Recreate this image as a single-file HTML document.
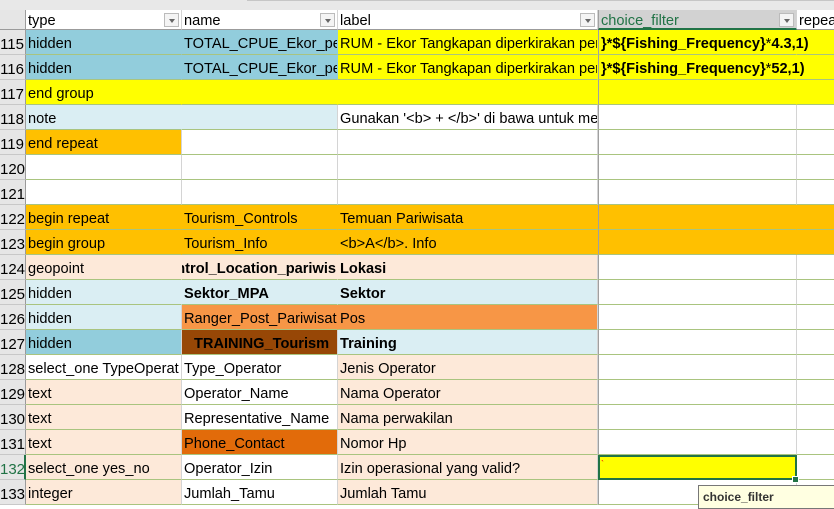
<!DOCTYPE html>
<html><head><meta charset="utf-8"><style>
*{margin:0;padding:0;box-sizing:border-box}
body{width:834px;height:506px;overflow:hidden;background:#fff;font-family:"Liberation Sans",Arial,sans-serif;font-size:14.6px;color:#000;position:relative}
.top{position:absolute;left:0;top:0;width:834px;height:10px;background:#e8e8e8}
.top i{position:absolute;left:247px;top:0;right:0;height:1px;background:#c6c6c6}
.r{position:absolute;left:0;display:flex;height:25px;width:834px;overflow:hidden}
.r>div{flex:none;height:25px;border-bottom:1px solid #a9c47f;border-right:1px solid #d4d4d4;white-space:nowrap;overflow:hidden;padding:3px 2px 0;line-height:23px;position:relative}
.r>div:nth-child(1){width:26px;background:#e6e6e6;text-align:right;padding:3px 1px 0 0;border-right:1px solid #9b9b9b;border-bottom:1px solid #c8c8c8;font-size:15px}
.r>div:nth-child(2){width:156px}
.r>div:nth-child(3){width:156px}
.r>div:nth-child(4){width:260px}
.r>div:nth-child(5){width:199px;border-left:1px solid #a0a0a0}
.r>div:nth-child(6){width:100px}
.h{top:10px;height:20px}
.h>div{height:20px!important;line-height:20px!important;border-bottom:1px solid #9b9b9b!important;padding-top:1px!important}
.dd{position:absolute;right:2px;top:3px;width:15px;height:14px;border:1px solid #bbb;background:#f4f4f4}
.dd:after{content:"";position:absolute;left:4px;top:5px;border-left:3px solid transparent;border-right:3px solid transparent;border-top:4px solid #666}
.bl{background:#92cddc}.y{background:#ffff00}.lb{background:#daeef3}.o{background:#ffc000}.p{background:#fde9d9}.or{background:#f79646}.br{background:#974706}.do{background:#e26b0a}
.b{font-weight:bold}
.nb{border-right-color:transparent!important}
.ov{overflow:visible!important;z-index:2}
</style></head><body>
<div class="top"><i></i></div>
<div class="r h"><div></div><div>type<span class="dd"></span></div><div>name<span class="dd"></span></div><div>label<span class="dd"></span></div><div style="background:#d2d2d2;color:#217346;border-bottom:2px solid #217346!important">choice_filter<span class="dd"></span></div><div>repeat_count</div></div>
<div class="r" style="top:30px"><div>115</div><div class="bl nb">hidden</div><div class="bl nb">TOTAL_CPUE_Ekor_pe</div><div class="y nb">RUM - Ekor Tangkapan diperkirakan pere</div><div class="y nb b ov">}*${Fishing_Frequency}<span style="font-weight:normal">*</span>4.3,1)</div><div class="y"></div></div>
<div class="r" style="top:55px"><div>116</div><div class="bl nb">hidden</div><div class="bl nb">TOTAL_CPUE_Ekor_pe</div><div class="y nb">RUM - Ekor Tangkapan diperkirakan pere</div><div class="y nb b ov">}*${Fishing_Frequency}<span style="font-weight:normal">*</span>52,1)</div><div class="y"></div></div>
<div class="r" style="top:80px"><div>117</div><div class="y nb">end group</div><div class="y nb"></div><div class="y nb"></div><div class="y nb"></div><div class="y"></div></div>
<div class="r" style="top:105px"><div>118</div><div class="lb nb">note</div><div class="lb"></div><div>Gunakan '&lt;b&gt; + &lt;/b&gt;' di bawa untuk me</div><div></div><div></div></div>
<div class="r" style="top:130px"><div>119</div><div class="o">end repeat</div><div></div><div></div><div></div><div></div></div>
<div class="r" style="top:155px"><div>120</div><div></div><div></div><div></div><div></div><div></div></div>
<div class="r" style="top:180px"><div>121</div><div></div><div></div><div></div><div></div><div></div></div>
<div class="r" style="top:205px"><div>122</div><div class="o nb">begin repeat</div><div class="o nb">Tourism_Controls</div><div class="o nb">Temuan Pariwisata</div><div class="o nb"></div><div class="o"></div></div>
<div class="r" style="top:230px"><div>123</div><div class="o nb">begin group</div><div class="o nb">Tourism_Info</div><div class="o nb">&lt;b&gt;A&lt;/b&gt;. Info</div><div class="o nb"></div><div class="o"></div></div>
<div class="r" style="top:255px"><div>124</div><div class="p nb">geopoint</div><div class="p nb b" style="direction:rtl;text-align:right;padding:3px 1px 0">ntrol_Location_pariwis</div><div class="p b">Lokasi</div><div></div><div></div></div>
<div class="r" style="top:280px"><div>125</div><div class="lb nb">hidden</div><div class="lb nb b">Sektor_MPA</div><div class="lb b">Sektor</div><div></div><div></div></div>
<div class="r" style="top:305px"><div>126</div><div class="lb">hidden</div><div class="or nb">Ranger_Post_Pariwisat</div><div class="or">Pos</div><div></div><div></div></div>
<div class="r" style="top:330px"><div>127</div><div class="bl">hidden</div><div class="br b" style="padding-left:12px">TRAINING_Tourism</div><div class="lb b">Training</div><div></div><div></div></div>
<div class="r" style="top:355px"><div>128</div><div>select_one TypeOperat</div><div>Type_Operator</div><div class="p">Jenis Operator</div><div></div><div></div></div>
<div class="r" style="top:380px"><div>129</div><div class="p">text</div><div>Operator_Name</div><div class="p">Nama Operator</div><div></div><div></div></div>
<div class="r" style="top:405px"><div>130</div><div class="p">text</div><div>Representative_Name</div><div class="p">Nama perwakilan</div><div></div><div></div></div>
<div class="r" style="top:430px"><div>131</div><div class="p">text</div><div class="do">Phone_Contact</div><div class="p">Nomor Hp</div><div></div><div></div></div>
<div class="r" style="top:455px"><div style="color:#217346;border-right:2px solid #217346">132</div><div class="p">select_one yes_no</div><div>Operator_Izin</div><div class="p">Izin operasional yang valid?</div><div style="background:#ffff00;outline:2px solid #217346;outline-offset:-2px;font-size:9px;color:#e00;line-height:12px;padding-top:3px">`</div><div></div></div>
<div class="r" style="top:480px"><div>133</div><div class="p">integer</div><div>Jumlah_Tamu</div><div class="p">Jumlah Tamu</div><div></div><div></div></div>
<div style="position:absolute;left:792px;top:476px;width:7px;height:7px;background:#217346;border:1px solid #fff"></div>
<div style="position:absolute;left:698px;top:485px;width:140px;height:24px;background:#ffffe1;border:1px solid #777;font-size:12px;font-weight:bold;color:#333;padding:4px 0 0 4px">choice_filter</div>
</body></html>
